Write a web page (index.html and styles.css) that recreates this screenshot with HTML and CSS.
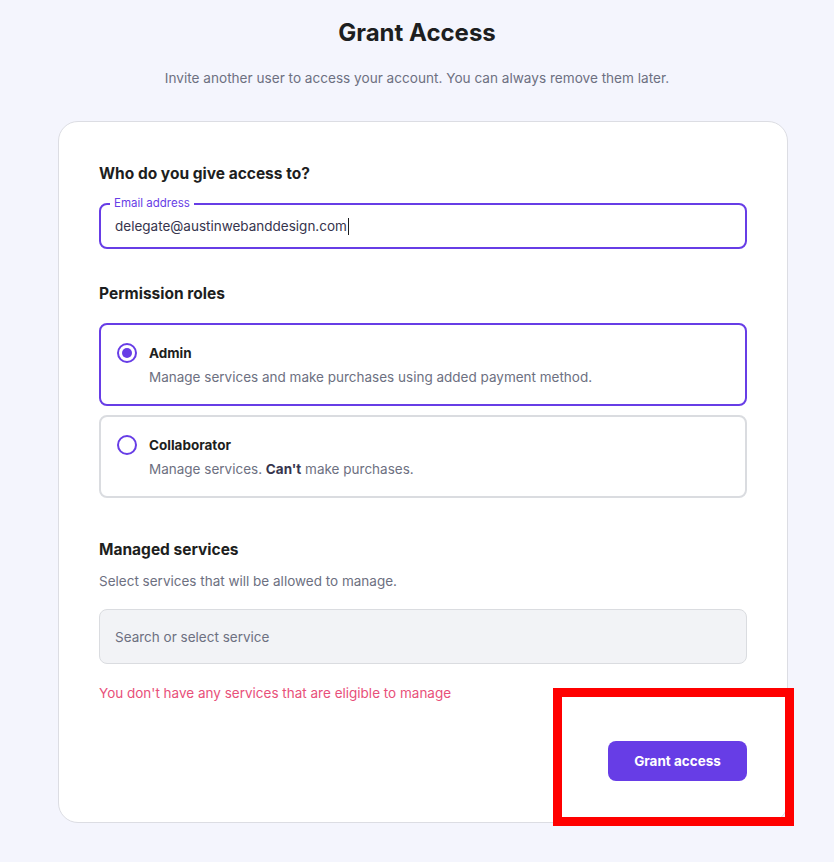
FILE: index.html
```html
<!DOCTYPE html>
<html lang="en">
<head>
<meta charset="utf-8">
<title>Grant Access</title>
<link rel="stylesheet" href="styles.css">
</head>
<body>
<main class="page">
  <h1 class="title">Grant Access</h1>
  <p class="subtitle">Invite another user to access your account. You can always remove them later.</p>
  <section class="card">
    <h2 class="section-title">Who do you give access to?</h2>
    <div class="field">
      <span class="field-label">Email address</span>
      <div class="field-value">delegate@austinwebanddesign.com<span class="caret"></span></div>
    </div>

    <h2 class="section-title roles-title">Permission roles</h2>
    <div class="roles">
      <div class="role role-active">
        <span class="radio radio-checked"></span>
        <div class="role-text">
          <div class="role-name">Admin</div>
          <div class="role-desc">Manage services and make purchases using added payment method.</div>
        </div>
      </div>
      <div class="role">
        <span class="radio"></span>
        <div class="role-text">
          <div class="role-name">Collaborator</div>
          <div class="role-desc">Manage services. <b>Can't</b> make purchases.</div>
        </div>
      </div>
    </div>

    <h2 class="section-title services-title">Managed services</h2>
    <p class="hint">Select services that will be allowed to manage.</p>
    <div class="search">Search or select service</div>
    <p class="error">You don't have any services that are eligible to manage</p>

    <div class="actions">
      <button class="btn">Grant access</button>
    </div>
  </section>
  <div class="highlight"></div>
</main>
</body>
</html>
```

FILE: styles.css
```css
* { box-sizing: border-box; }
html, body {
  margin: 0;
  padding: 0;
  background: #f4f5fd;
  font-family: Inter, "DejaVu Sans", sans-serif;
  color: #1d1e20;
}
.page {
  position: relative;
  width: 834px;
  height: 862px;
  padding-top: 17px;
}
.title {
  margin: 0;
  text-align: center;
  font-size: 24px;
  line-height: 32px;
  font-weight: 700;
  color: #1d1e20;
}
.subtitle {
  margin: 19px 0 0;
  text-align: center;
  font-size: 13.6px;
  line-height: 20px;
  color: #6d7081;
}
.card {
  margin: 33px 0 0 58px;
  width: 730px;
  background: #fff;
  border: 1px solid #dcdde3;
  border-radius: 20px;
  padding: 40px 40px 41px 40px;
}
.section-title {
  margin: 0;
  font-size: 15.5px;
  line-height: 24px;
  font-weight: 700;
  color: #1d1e20;
}
.field {
  position: relative;
  margin-top: 17px;
  height: 46px;
  border: 2px solid #673de6;
  border-radius: 8px;
  display: flex;
  align-items: center;
  padding: 0 14px;
}
.field-label {
  position: absolute;
  top: -9px;
  left: 9px;
  padding: 0 4px;
  background: #fff;
  font-size: 11.5px;
  line-height: 14px;
  color: #673de6;
}
.field-value {
  font-size: 13.5px;
  color: #36344d;
  display: flex;
  align-items: center;
}
.caret {
  display: inline-block;
  width: 1px;
  height: 17px;
  background: #1d1e20;
  margin-left: 1px;
}
.roles-title { margin-top: 33px; }
.roles {
  margin-top: 17px;
  display: flex;
  flex-direction: column;
  gap: 9px;
}
.role {
  display: flex;
  align-items: flex-start;
  gap: 12px;
  height: 83px;
  border: 2px solid #dadce0;
  border-radius: 8px;
  padding: 18px 16px 0 16px;
}
.role-active { border-color: #673de6; }
.radio {
  flex: none;
  width: 20px;
  height: 20px;
  border: 2px solid #673de6;
  border-radius: 50%;
  position: relative;
}
.radio-checked::after {
  content: "";
  position: absolute;
  left: 3px;
  top: 3px;
  width: 10px;
  height: 10px;
  border-radius: 50%;
  background: #673de6;
}
.role-name {
  font-size: 13.5px;
  line-height: 20px;
  font-weight: 700;
  color: #1d1e20;
}
.role-desc {
  margin-top: 4px;
  font-size: 13.5px;
  line-height: 20px;
  color: #6d7081;
}
.role-desc b { color: #36344d; font-weight: 700; }
.services-title { margin-top: 40px; }
.hint {
  margin: 9px 0 0;
  font-size: 13.5px;
  line-height: 20px;
  color: #6d7081;
}
.search {
  margin-top: 18px;
  height: 55px;
  background: #f2f3f6;
  border: 1px solid #dadce0;
  border-radius: 8px;
  padding: 0 15px;
  display: flex;
  align-items: center;
  font-size: 13.5px;
  color: #6d7081;
}
.error {
  margin: 19px 0 0;
  font-size: 13.5px;
  line-height: 20px;
  color: #e8507a;
}
.actions {
  margin-top: 38px;
  display: flex;
  justify-content: flex-end;
}
.btn {
  width: 139px;
  height: 40px;
  border: none;
  border-radius: 8px;
  background: #673de6;
  color: #fff;
  font-family: inherit;
  font-size: 13.5px;
  font-weight: 700;
}
.highlight {
  position: absolute;
  left: 553px;
  top: 688px;
  width: 241px;
  height: 138px;
  border: 9px solid #ff0000;
}
```
